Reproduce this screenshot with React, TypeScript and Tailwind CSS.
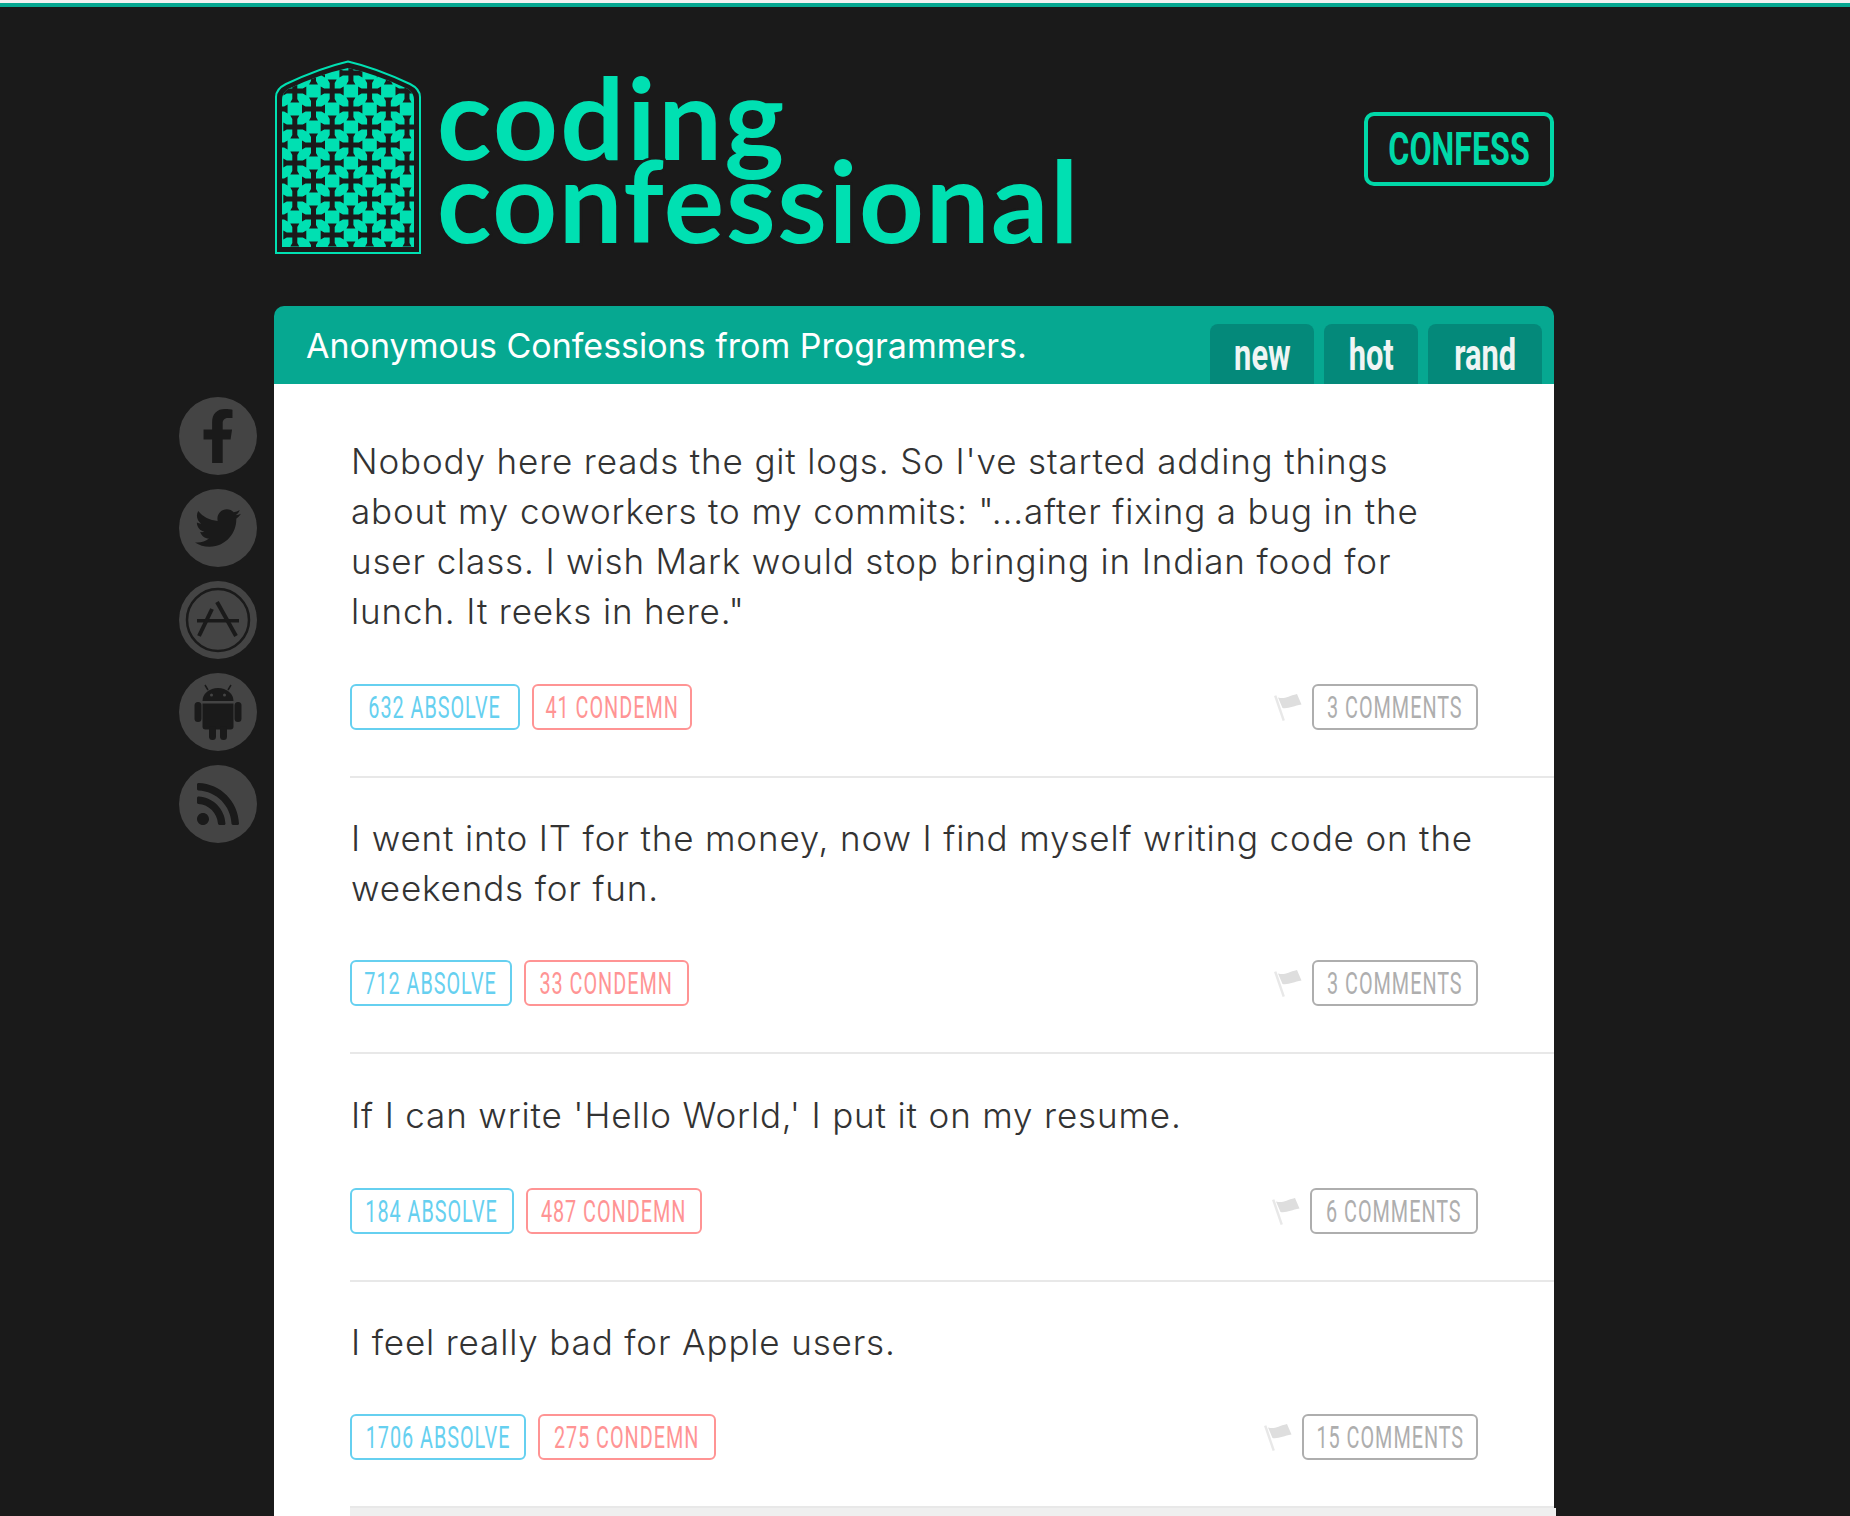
import { JSX, ReactNode } from "react";
import { FaFacebookF, FaRss, FaTwitter } from "react-icons/fa";

// Roboto squeezed sideways stands in for the condensed face
const condensed = "font-['Roboto',sans-serif] whitespace-nowrap inline-block";

type Post = {
  lines: string[];
  absolve: number;
  absolveWidth: number;
  condemn: number;
  condemnWidth: number;
  comments: number;
  commentsWidth: number;
  spacing: string;
  actionsGap: string;
};

const posts: Post[] = [
  {
    lines: [
      "Nobody here reads the git logs. So I've started adding things",
      'about my coworkers to my commits: "...after fixing a bug in the',
      "user class. I wish Mark would stop bringing in Indian food for",
      'lunch. It reeks in here."',
    ],
    absolve: 632,
    absolveWidth: 170,
    condemn: 41,
    condemnWidth: 160,
    comments: 3,
    commentsWidth: 166,
    spacing: "pt-[52px]",
    actionsGap: "mt-[48px]",
  },
  {
    lines: ["I went into IT for the money, now I find myself writing code on the", "weekends for fun."],
    absolve: 712,
    absolveWidth: 162,
    condemn: 33,
    condemnWidth: 165,
    comments: 3,
    commentsWidth: 166,
    spacing: "pt-[35px]",
    actionsGap: "mt-[47px]",
  },
  {
    lines: ["If I can write 'Hello World,' I put it on my resume."],
    absolve: 184,
    absolveWidth: 164,
    condemn: 487,
    condemnWidth: 176,
    comments: 6,
    commentsWidth: 168,
    spacing: "pt-[36px]",
    actionsGap: "mt-[48px]",
  },
  {
    lines: ["I feel really bad for Apple users."],
    absolve: 1706,
    absolveWidth: 176,
    condemn: 275,
    condemnWidth: 178,
    comments: 15,
    commentsWidth: 176,
    spacing: "pt-[35px]",
    actionsGap: "mt-[47px]",
  },
];

// holes of the lattice, staggered on a diamond grid
function latticeHoles(): { x: number; y: number }[] {
  const holes: { x: number; y: number }[] = [];
  for (let row = 0; row < 12; row++) {
    for (let col = 0; col < 5; col++) {
      holes.push({ x: 2.1 + col * 37.4 + (row % 2 ? 18.7 : 0), y: 13 + row * 18 });
    }
  }
  return holes;
}

function LogoMark(): JSX.Element {
  return (
    <svg width="148" height="196" viewBox="0 0 148 196" className="shrink-0">
      <defs>
        <clipPath id="arch">
          <path d="M8 40 Q8 33 14 29 Q46 14 74 8 Q102 14 134 29 Q140 33 140 40 V187 H8 Z" />
        </clipPath>
      </defs>
      <g clipPath="url(#arch)">
        <rect width="148" height="196" fill="#00e0b2" />
        {latticeHoles().map((h) => (
          <path
            key={`${h.x}-${h.y}`}
            transform={`translate(${h.x} ${h.y})`}
            d="M-2.500-2.500L-2.500-8L-4.500-11.500L4.500-11.500L2.500-8L2.500-2.500L8-2.500L11.500-4.500L11.500 4.500L8 2.500L2.500 2.500L2.500 8L4.500 11.500L-4.500 11.500L-2.500 8L-2.500 2.500L-8 2.500L-11.500 4.500L-11.500-4.500L-8-2.500Z"
            fill="#1a1a1a"
          />
        ))}
      </g>
      <path
        d="M2 193V37 Q2 29 12 24 Q46 8 74 1.500 Q102 8 136 24 Q146 29 146 37V193Z"
        fill="none"
        stroke="#00e0b2"
        strokeWidth="2"
      />
    </svg>
  );
}

function Logo(): JSX.Element {
  return (
    <div className="flex items-start">
      <LogoMark />
      <div className="ml-[15px] -mt-[1px] font-['Lato',sans-serif] font-bold text-[#00e0b2] text-[113px] leading-[83px]">
        <div className="h-[83px] pt-[16px] tracking-[2.500px]">coding</div>
        <div className="h-[83px] pt-[16px] tracking-[1.700px] [-webkit-text-stroke:5px_#1a1a1a] [paint-order:stroke_fill]">
          confessional
        </div>
      </div>
    </div>
  );
}

function Tab({ label, width }: { label: string; width: string }): JSX.Element {
  return (
    <div
      className={`${width} h-[60px] rounded-t-[8px] bg-[#04897a] text-[#f0f5f4] flex justify-center overflow-hidden`}
    >
      <span className={`${condensed} text-[44px] leading-[62px] font-bold scale-x-[0.7]`}>{label}</span>
    </div>
  );
}

function Pill({ label, tone, width }: { label: string; tone: "blue" | "red" | "gray"; width: number }): JSX.Element {
  const tones = {
    blue: "border-[#66d0f0] text-[#66d0f0]",
    red: "border-[#ff9494] text-[#ff9494]",
    gray: "border-[#aeaeae] text-[#aeaeae]",
  };
  return (
    <div
      className={`h-[46px] border-2 rounded-[6px] flex justify-center overflow-hidden ${tones[tone]}`}
      style={{ width }}
    >
      <span className={`${condensed} text-[31px] leading-[44px] tracking-[1.500px] scale-x-[0.64]`}>{label}</span>
    </div>
  );
}

function Flag(): JSX.Element {
  return (
    <svg width="30" height="32" viewBox="0 0 30 32">
      <path d="M1 5l2.400-.7 8.500 25-2.300.8z" fill="#e8e8e8" />
      <path d="M5 6.500c7 2 10-1.500 19-3.500l4.500 10.500c-8 1.500-13 4.500-19 3.500z" fill="#dedede" />
    </svg>
  );
}

function PostRow({ post }: { post: Post }): JSX.Element {
  return (
    <div className={`ml-[76px] border-b-2 border-[#e8e8e8] pb-[46px] ${post.spacing}`}>
      <div className="mr-[76px] pl-[1px] font-['Inter',sans-serif] text-[35px] leading-[50px] tracking-[0.85px] text-[#333] font-light">
        {post.lines.map((line) => (
          <div key={line} className="whitespace-nowrap">
            {line}
          </div>
        ))}
      </div>
      <div className={`mr-[76px] flex items-center ${post.actionsGap}`}>
        <div className="flex gap-[12px]">
          <Pill label={`${post.absolve} ABSOLVE`} tone="blue" width={post.absolveWidth} />
          <Pill label={`${post.condemn} CONDEMN`} tone="red" width={post.condemnWidth} />
        </div>
        <div className="ml-auto flex items-center gap-[9px]">
          <Flag />
          <Pill label={`${post.comments} COMMENTS`} tone="gray" width={post.commentsWidth} />
        </div>
      </div>
    </div>
  );
}

function SocialIcon({ children }: { children: ReactNode }): JSX.Element {
  return (
    <div className="w-[78px] h-[78px] rounded-full bg-[#444] text-[#1a1a1a] flex items-center justify-center">
      {children}
    </div>
  );
}

function AppStoreIcon(): JSX.Element {
  return (
    <svg width="78" height="78" viewBox="-39 -39 78 78" fill="none" stroke="#1a1a1a">
      <circle r="31" strokeWidth="2.500" />
      <path d="M-21 .7H21" strokeWidth="3.500" />
      <path d="M-6-11L-19 16" strokeWidth="4" />
      <path d="M-1-18L18 16" strokeWidth="4" />
    </svg>
  );
}

function AndroidIcon(): JSX.Element {
  return (
    <svg width="78" height="78" viewBox="-39 -39 78 78" fill="#1a1a1a">
      <path d="M-15.500-11a15.500 13 0 0 1 31 0z" />
      <path d="M-15.500-8.500h31v23a3 3 0 0 1-3 3h-25a3 3 0 0 1-3-3z" />
      <rect x="-23.500" y="-10" width="7" height="20" rx="3.500" />
      <rect x="16.500" y="-10" width="7" height="20" rx="3.500" />
      <rect x="-9" y="14" width="7" height="14" rx="3.500" />
      <rect x="2" y="14" width="7" height="14" rx="3.500" />
      <path d="M-10-22l-3-5M10-22l3-5" stroke="#1a1a1a" strokeWidth="1.500" />
      <circle cx="-6.500" cy="-17" r="1.500" fill="#444" />
      <circle cx="6.500" cy="-17" r="1.500" fill="#444" />
    </svg>
  );
}

export default function App(): JSX.Element {
  return (
    <div className="w-[1850px] h-[1516px] overflow-hidden bg-[#1a1a1a] font-['Inter',sans-serif]">
      <div className="h-[3px] bg-[#f2f2f2]" />
      <div className="h-[4px] bg-[#06a891]" />

      <header className="ml-[274px] w-[1280px] h-[299px] flex justify-between items-start">
        <div className="mt-[53px]">
          <Logo />
        </div>
        <div className="mt-[105px] w-[190px] h-[74px] border-[4px] border-[#00d8a8] rounded-[10px] text-[#00d8a8] flex justify-center overflow-hidden">
          <span className={`${condensed} text-[46px] leading-[66px] font-bold scale-x-[0.7]`}>CONFESS</span>
        </div>
      </header>

      <div className="ml-[179px] flex">
        <aside className="w-[78px] mt-[91px] flex flex-col gap-[14px]">
          <SocialIcon>
            <FaFacebookF size={54} />
          </SocialIcon>
          <SocialIcon>
            <FaTwitter size={46} />
          </SocialIcon>
          <SocialIcon>
            <AppStoreIcon />
          </SocialIcon>
          <SocialIcon>
            <AndroidIcon />
          </SocialIcon>
          <SocialIcon>
            <FaRss size={48} />
          </SocialIcon>
        </aside>

        <main className="ml-[17px] w-[1280px]">
          <div className="h-[78px] bg-[#06a891] rounded-t-[10px] flex justify-between pl-[32px] pr-[12px]">
            <div className="text-[34px] leading-[80px] text-white">Anonymous Confessions from Programmers.</div>
            <div className="mt-[18px] flex gap-[10px]">
              <Tab label="new" width="w-[104px]" />
              <Tab label="hot" width="w-[94px]" />
              <Tab label="rand" width="w-[114px]" />
            </div>
          </div>
          <div className="bg-white">
            {posts.map((post) => (
              <PostRow key={post.absolve} post={post} />
            ))}
            <div className="ml-[76px] -mr-[2px] h-[20px] bg-[#efefef]" />
          </div>
        </main>
      </div>
    </div>
  );
}
